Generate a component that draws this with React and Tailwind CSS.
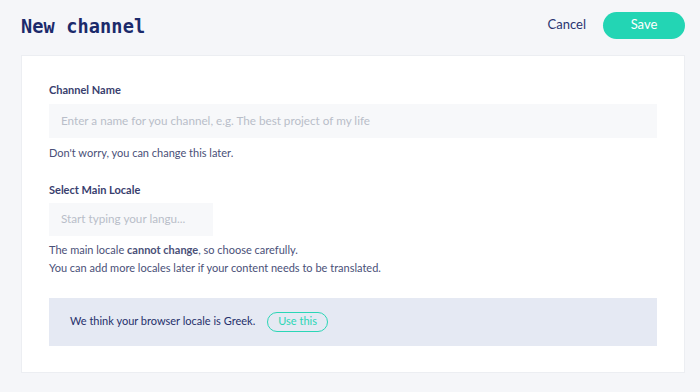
export default function App() {
  const font = { fontFamily: 'Lato, "Open Sans", sans-serif' };
  return (
    <div className="w-[700px] h-[392px] bg-[#f5f6f9] overflow-hidden" style={font}>
      <div className="flex items-center justify-between pl-[21px] pr-[15px] h-[52px]">
        <h1 className="text-[18.6px] font-bold text-[#1b2a6b] tracking-[0.1px] mt-[1px]" style={{ fontFamily: '"DejaVu Sans Mono", "Liberation Mono", monospace' }}>
          New channel
        </h1>
        <div className="flex items-center gap-[17px] mt-[-2px]">
          <button className="text-[13px] text-[#2a3470]">Cancel</button>
          <button className="w-[82px] h-[27px] rounded-full bg-[#23d5b4] text-white text-[13px]">Save</button>
        </div>
      </div>
      <div className="ml-[21px] mt-[3px] w-[664px] h-[318px] bg-white border border-[#eceef2] pl-[27px] pr-[27px] pt-[26px]">
        <div className="text-[11px] font-bold text-[#39406e]">Channel Name</div>
        <div className="mt-[5px] h-[34px] bg-[#f7f8fa] flex items-center px-[12px] text-[11.7px] text-[#b9bec9]">
          Enter a name for you channel, e.g. The best project of my life
        </div>
        <div className="mt-[7px] text-[11px] text-[#4a5078]">Don't worry, you can change this later.</div>
        <div className="mt-[21px] text-[11px] font-bold text-[#39406e]">Select Main Locale</div>
        <div className="mt-[4px] w-[164px] h-[33px] bg-[#f7f8fa] flex items-center px-[12px] text-[11.7px] text-[#b9bec9]">
          Start typing your langu...
        </div>
        <div className="mt-[5px] text-[11px] leading-[18px] text-[#4a5078]">
          <div>The main locale <span className="font-bold">cannot change</span>, so choose carefully.</div>
          <div>You can add more locales later if your content needs to be translated.</div>
        </div>
        <div className="mt-[21px] h-[48px] bg-[#e5e9f3] flex items-center pl-[21px] gap-[12px]">
          <span className="text-[11px] text-[#26306b]">We think your browser locale is Greek.</span>
          <button className="h-[20px] px-[10px] rounded-full border-[1.5px] border-[#2bd6b6] text-[11px] text-[#2bd6b6]">Use this</button>
        </div>
      </div>
    </div>
  );
}
